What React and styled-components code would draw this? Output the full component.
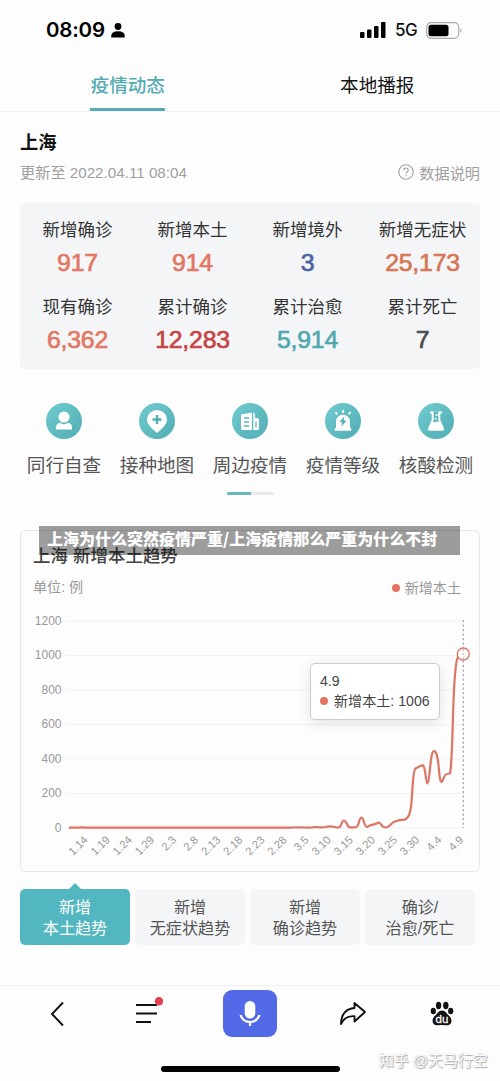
import React from "react";
import styled, { createGlobalStyle } from "styled-components";

const Global = createGlobalStyle`
  * { box-sizing: border-box; }
  body { margin: 0; background: #fdfdfd; overflow: hidden; }
`;

const Screen = styled.div`
  position: relative;
  width: 500px;
  height: 1081px;
  overflow: hidden;
  display: flex;
  flex-direction: column;
  background: #fdfdfd;
  color: #111;
  white-space: nowrap;
  font-family: "Liberation Sans", "Noto Sans CJK SC", sans-serif;
  svg { display: block; flex: none; }
`;

const StatusBar = styled.header`
  height: 60px;
  flex: none;
  display: flex;
  justify-content: space-between;
  align-items: center;
  padding: 0 37px 0 46px;
`;

const StatusGroup = styled.div`
  display: flex;
  align-items: center;
  gap: ${(p) => p.$gap}px;
`;

const Clock = styled.span`
  font: 600 20.5px/24px Inter, sans-serif;
  letter-spacing: -0.2px;
  color: #000;
`;

const Network = styled.span`
  font: 500 17px/20px Inter, sans-serif;
  letter-spacing: -0.3px;
  color: #111;
`;

const Tabs = styled.nav`
  height: 52px;
  flex: none;
  display: flex;
  border-bottom: 1px solid #f1f1f1;
`;

const TabSlot = styled.div`
  flex: 1;
  display: flex;
  justify-content: center;
  padding-left: ${(p) => (p.$active ? 5 : 4)}px;
`;

const Tab = styled.div`
  width: 75px;
  padding-top: 12px;
  text-align: center;
  font-size: 18.6px;
  line-height: 27px;
  font-weight: ${(p) => (p.$active ? 500 : 400)};
  color: ${(p) => (p.$active ? "#55abb2" : "#151515")};
  border-bottom: 3px solid ${(p) => (p.$active ? "#57aab2" : "transparent")};
`;

const City = styled.h1`
  margin: 17px 0 0 20px;
  flex: none;
  height: 27px;
  font-size: 18.3px;
  line-height: 27px;
  font-weight: 700;
`;

const InfoRow = styled.div`
  display: flex;
  justify-content: space-between;
  align-items: center;
  flex: none;
  height: 22px;
  margin: 4px 20px 0;
  color: #a0a0a0;
  font-size: 15.2px;
`;

const UpdateText = styled.span`
  padding-bottom: 1px;
`;

const HelpLink = styled.span`
  display: flex;
  align-items: center;
  gap: 5px;
  padding-top: 2px;
`;

const StatsCard = styled.section`
  flex: none;
  height: 166px;
  margin: 21px 20px 0;
  padding-top: 14px;
  display: grid;
  grid-template-columns: repeat(4, 1fr);
  grid-auto-rows: 77px;
  border-radius: 5px;
  background: #f4f5f7;
  text-align: center;
`;

const StatLabel = styled.div`
  font-size: 17.5px;
  line-height: 26px;
  color: #333;
`;

const StatValue = styled.div`
  margin-top: 5px;
  font-size: 24.8px;
  line-height: 30px;
  letter-spacing: -0.2px;
  -webkit-text-stroke: 0.65px currentColor;
  color: ${(p) => p.$color};
`;

const Shortcuts = styled.section`
  flex: none;
  display: grid;
  grid-template-columns: repeat(5, 93px);
  justify-content: center;
  margin-top: 34px;
  height: 76px;
`;

const Shortcut = styled.div`
  display: flex;
  flex-direction: column;
  align-items: center;
  font-size: 18.6px;
  line-height: 27px;
  color: #555;
  gap: 13px;
`;

const Badge = styled.div`
  width: 36px;
  height: 36px;
  border-radius: 50%;
  background: linear-gradient(135deg, #70cccf, #51acb4);
`;

const Pager = styled.div`
  flex: none;
  width: 47px;
  height: 3px;
  margin: 13px auto 0;
  border-radius: 2px;
  background: linear-gradient(90deg, #65b8bf 50%, #e8ebeb 50%);
`;

const ChartCard = styled.section`
  position: relative;
  flex: none;
  height: 342px;
  margin: 35px 20px 0;
  padding: 12px 0 0;
  border: 1px solid #e7e7e7;
  border-radius: 6px;
`;

const ChartTitle = styled.h2`
  margin: 0 12px;
  font-size: 17.4px;
  line-height: 26px;
  font-weight: 500;
  letter-spacing: 0.1px;
  color: #444;
`;

const ChartMeta = styled.div`
  display: flex;
  justify-content: space-between;
  padding: 6px 18px 0 12px;
  height: 34px;
  font-size: 14.1px;
  line-height: 24px;
  color: #999;
`;

const Legend = styled.span`
  display: flex;
  align-items: center;
  height: ${(p) => p.$height || 20}px;
  gap: ${(p) => p.$gap || 5}px;
  &::before {
    content: "";
    flex: none;
    width: 8px;
    height: 8px;
    border-radius: 50%;
    background: #e3735f;
  }
`;

const Tooltip = styled.div`
  position: absolute;
  left: 289px;
  top: 132px;
  width: 130px;
  height: 57px;
  padding: 7px 8px 7px 9px;
  border: 1px solid #ccc;
  border-radius: 5px;
  background: #fff;
  box-shadow: 0 3px 14px rgba(0, 0, 0, 0.1);
  color: #444;
  font-size: 14.1px;
  line-height: 20px;
`;

const Caption = styled.div`
  position: absolute;
  left: 39px;
  top: 526px;
  width: 421px;
  height: 29px;
  padding-left: 8px;
  background: rgba(0, 0, 0, 0.385);
  color: #fff;
  font: 900 16px/25px "Noto Sans CJK SC", sans-serif;
`;

const TrendTabs = styled.section`
  flex: none;
  display: flex;
  gap: 5px;
  margin: 17px 20px 0;
`;

const TrendTab = styled.div`
  position: relative;
  width: 110px;
  height: 56px;
  padding-top: 8px;
  border-radius: 5px;
  text-align: center;
  font-size: 16.1px;
  line-height: 21px;
  background: ${(p) => (p.$active ? "#52b7c1" : "#f4f5f7")};
  color: ${(p) => (p.$active ? "#fff" : "#555")};
  &::before {
    content: "";
    display: ${(p) => (p.$active ? "block" : "none")};
    position: absolute;
    left: 49px;
    top: -6px;
    border: solid transparent;
    border-width: 0 6px 6px;
    border-bottom-color: #52b7c1;
  }
`;

const BottomBar = styled.footer`
  margin-top: auto;
  flex: none;
  height: 96px;
  border-top: 1px solid #f0f0f0;
  display: flex;
  flex-direction: column;
  align-items: center;
`;

const NavRow = styled.div`
  width: 100%;
  height: 55px;
  display: grid;
  grid-template-columns: 91px 82px 122px 83px 96px;
  padding-left: 16px;
  align-items: center;
  justify-items: center;
`;

const MicButton = styled.div`
  width: 54px;
  height: 47px;
  border-radius: 9px;
  background: #5269e8;
`;

const HomeIndicator = styled.div`
  width: 179px;
  height: 6px;
  margin-top: 25px;
  border-radius: 3px;
  background: #000;
`;

const Watermark = styled.div`
  position: absolute;
  left: 379px;
  top: 1049px;
  font-size: 14.9px;
  line-height: 24px;
  color: #fff;
  text-shadow: 0 0 1px #999, 1px 1px 1px #aaa;
`;

const stats = [
  ["新增确诊", "917", "#e27763"],
  ["新增本土", "914", "#e27763"],
  ["新增境外", "3", "#4b649f"],
  ["新增无症状", "25,173", "#d67653"],
  ["现有确诊", "6,362", "#e27763"],
  ["累计确诊", "12,283", "#c54342"],
  ["累计治愈", "5,914", "#50a8af"],
  ["累计死亡", "7", "#4b4b4e"],
];

const glyphs = {
  person: (
    <g fill="#fff">
      <circle cx="18" cy="14" r="5.6" />
      <path d="M10 26.500v-2q0-4 4.300-4.700 3.700 3 7.400 0 4.300.7 4.300 4.700v2z" />
    </g>
  ),
  pin: (
    <>
      <path d="M18 30Q8 22 8 16.8a10 9.8 0 0 1 20 0Q28 22 18 30z" fill="#fff" />
      <path d="M18 12v9M13.5 16.5h9" stroke="#53adb5" strokeWidth="2.4" />
    </>
  ),
  building: (
    <>
      <path d="M9 11.500L20 9.500V27H10.500Q9 27 9 25.500z" fill="#fff" />
      <path d="M21.300 9.500L23 10.500V15h2.500q1.500 0 1.500 1.500v9q0 1.500-1.500 1.500h-4.200z" fill="#fff" />
      <path d="M12 15h5M12 19h5M12 23h5M24 18.500v6" stroke="#5bb8be" strokeWidth="1.300" />
    </>
  ),
  alarm: (
    <>
      <path d="M11 25V18.5a7 6.7 0 0 1 14 0V25h1.2v2.7H9.8V25z" fill="#fff" />
      <path d="M18 7v3M10.5 9l1.7 2.5M25.5 9l-1.7 2.5" stroke="#fff" strokeWidth="1.8" />
      <path d="M19.2 13.5L14.5 19h2.7l-.7 4.5 5-6h-2.8z" fill="#53adb5" />
    </>
  ),
  flask: (
    <>
      <path d="M12 8.5h12v2h-1.700V17l3.700 8.500q.8 2.200-1.600 2.200H11.600q-2.400 0-1.600-2.200L13.700 17v-6.500H12z" fill="#fff" />
      <path d="M15.700 8.500h4.600v8.500l1 2q-2.300-1.200-3.800 0-1.500.8-2.600-.2l.8-1.800z" fill="#5ab7bd" />
      <circle cx="18.600" cy="12" r="1.100" fill="#fff" />
      <circle cx="17.600" cy="15.800" r="1" fill="#fff" />
    </>
  ),
};

const shortcuts = [
  ["同行自查", "person"],
  ["接种地图", "pin"],
  ["周边疫情", "building"],
  ["疫情等级", "alarm"],
  ["核酸检测", "flask"],
];

const yTicks = [1200, 1000, 800, 600, 400, 200, 0];
const xTicks = "1.14 1.19 1.24 1.29 2.3 2.8 2.13 2.18 2.23 2.28 3.5 3.10 3.15 3.20 3.25 3.30 4.4 4.9".split(" ");

const Plot = styled.svg`
  text {
    font-family: "Liberation Sans", sans-serif;
    font-size: 12px;
    fill: #999;
    text-anchor: end;
  }
`;

const DateTicks = styled.g`
  text {
    font-size: 11.2px;
  }
`;

function TrendChart() {
  return (
    <Plot width="458" height="266" viewBox="21 603 458 266">
      {yTicks.map((t) => {
        const y = 828 - t * 0.1725;
        return (
          <g key={t}>
            <path d={`M66 ${y}H465`} stroke="#f3f3f3" />
            <text x="61.5" y={y + 3.7}>{t}</text>
          </g>
        );
      })}
      <DateTicks>
        {xTicks.map((t, i) => (
          <text key={t} transform={`translate(${88.5 + i * 22.1} 840.5) rotate(-45)`}>{t}</text>
        ))}
      </DateTicks>
      <path d="M463.300 620V828" stroke="#aaa" strokeWidth="1.300" strokeDasharray="2.300 2.200" />
      <path
        d="M69 827.700H78Q82 827 86 827.700H289C294 827.700 294 827 299 827.500C304 827 306 828 311 827.500C316 826.500 321 828 326 827C331 825 335 827.500 338 827.500C342 828 341 820.500 344 820.500C347 821 347 827.300 350 827.300H356C359 827 359 817.500 361.500 817.500C364 818 364 827 367 827C370 824.500 374 825 379 822.500C381 822.500 381 827.500 385.500 827.500C390 827.500 391 822.500 395 821.500C400 819.500 402 819.700 405.500 819.500C409 816 409 816.500 411 807C413 789 412.500 771 415.500 768.500C418 767 420 766 423 765C425.500 767 425.700 783 427.500 783.500C430 783 430 750.500 434 751.200C440 752 438 782 441.700 782C444 780 443 773 450 773.500C452.500 765 452.500 711 454.500 681C456 661 457 655 461 654"
        fill="none"
        stroke="#dc7563"
        strokeWidth="2.200"
        strokeLinejoin="round"
      />
      <circle cx="463.300" cy="654" r="6" fill="#fff" stroke="#dc7563" strokeWidth="1.300" />
      <path d="M463.300 649v10" stroke="#bbb" strokeDasharray="2 2" />
    </Plot>
  );
}

const trends = [
  ["新增", "本土趋势"],
  ["新增", "无症状趋势"],
  ["新增", "确诊趋势"],
  ["确诊/", "治愈/死亡"],
];

export default function App() {
  return (
    <Screen>
      <Global />
      <StatusBar>
        <StatusGroup $gap={6}>
          <Clock>08:09</Clock>
          <svg width="14" height="15" viewBox="0 0 14 15">
            <circle cx="7" cy="3.500" r="3.400" />
            <path d="M.3 14.500Q-.5 8.300 7 8.300t6.700 6.200z" />
          </svg>
        </StatusGroup>
        <StatusGroup $gap={8.5}>
          <svg width="26" height="16" viewBox="0 0 26 16">
            <rect x="0" y="10" width="4.500" height="6" rx="1" />
            <rect x="7" y="7.500" width="4.500" height="8.500" rx="1" />
            <rect x="14" y="4" width="4.500" height="12" rx="1" />
            <rect x="21" y="0" width="4.500" height="16" rx="1" />
          </svg>
          <Network>5G</Network>
          <svg width="37" height="17" viewBox="0 0 37 17">
            <rect x=".7" y=".7" width="32" height="15.600" rx="4.500" fill="none" stroke="#aaa" strokeWidth="1.200" />
            <rect x="2.500" y="2.700" width="20" height="11.600" rx="2.500" />
            <path d="M34.500 6q2 2.500 0 5z" fill="#999" />
          </svg>
        </StatusGroup>
      </StatusBar>

      <Tabs>
        <TabSlot $active><Tab $active>疫情动态</Tab></TabSlot>
        <TabSlot><Tab>本地播报</Tab></TabSlot>
      </Tabs>

      <City>上海</City>
      <InfoRow>
        <UpdateText>更新至 2022.04.11 08:04</UpdateText>
        <HelpLink>
          <svg width="16" height="16" viewBox="0 0 16 16" fill="none" stroke="#a0a0a0" strokeWidth="1.100">
            <circle cx="8" cy="8" r="7.200" />
            <path d="M5.700 6.300c0-3 4.600-3 4.600-.2C10.300 7.800 8 7.800 8 9.800M8 11v1.300" />
          </svg>
          数据说明
        </HelpLink>
      </InfoRow>

      <StatsCard>
        {stats.map(([label, value, color]) => (
          <div key={label}>
            <StatLabel>{label}</StatLabel>
            <StatValue $color={color}>{value}</StatValue>
          </div>
        ))}
      </StatsCard>

      <Shortcuts>
        {shortcuts.map(([label, icon]) => (
          <Shortcut key={label}>
            <Badge>
              <svg width="36" height="36" viewBox="0 0 36 36">{glyphs[icon]}</svg>
            </Badge>
            {label}
          </Shortcut>
        ))}
      </Shortcuts>
      <Pager />

      <ChartCard>
        <ChartTitle>上海 新增本土趋势</ChartTitle>
        <ChartMeta>
          <span>单位: 例</span>
          <Legend $height={26}>新增本土</Legend>
        </ChartMeta>
        <TrendChart />
        <Tooltip>
          <div>4.9</div>
          <Legend $gap={6}>新增本土: 1006</Legend>
        </Tooltip>
      </ChartCard>

      <TrendTabs>
        {trends.map(([a, b], i) => (
          <TrendTab key={b} $active={i === 0}>
            {a}
            <br />
            {b}
          </TrendTab>
        ))}
      </TrendTabs>

      <BottomBar>
        <NavRow>
          <svg width="24" height="26" viewBox="0 0 24 26" fill="none" stroke="#111" strokeWidth="1.900">
            <path d="M13 1.500L2 13l11 11.500" />
          </svg>
          <svg width="30" height="34" viewBox="0 0 30 34">
            <path d="M3 8h21M3 16.500h21M3 25h15" stroke="#111" strokeWidth="2" />
            <circle cx="26" cy="4.300" r="4.200" fill="#e43e51" />
          </svg>
          <MicButton>
            <svg width="54" height="47" viewBox="0 0 54 47">
              <rect x="21.700" y="11" width="10.600" height="17.500" rx="5.300" fill="#fff" />
              <path d="M17.500 25q2.500 7 9.500 7t9.500-7M27 32v4" fill="none" stroke="#fff" strokeWidth="2.200" />
            </svg>
          </MicButton>
          <svg width="28" height="26" viewBox="0 0 28 26" fill="none" stroke="#111" strokeWidth="1.900" strokeLinejoin="round">
            <path d="M15.500 2L26 11 15.500 20.500v-5.300Q6 14.500 2 23C2 13 7.500 7.500 15.500 7z" />
          </svg>
          <svg width="24" height="26" viewBox="0 0 24 26" fill="#111">
            <ellipse cx="8.600" cy="4.500" rx="2.700" ry="3.700" />
            <ellipse cx="15.800" cy="4.500" rx="2.700" ry="3.700" />
            <ellipse cx="3.300" cy="10" rx="2.600" ry="3.200" />
            <ellipse cx="20.700" cy="10" rx="2.600" ry="3.200" />
            <path d="M12 9.500c3.500 0 4.300 3 7 5.300 4.500 4 2.500 10-2.500 9.500q-4.500-.6-9 0C2.500 24.800.5 18.800 5 14.800 7.700 12.500 8.500 9.500 12 9.500z" />
            <text x="12" y="22.300" textAnchor="middle" fontFamily="Liberation Sans, sans-serif" fontSize="11.500" fill="#fff" stroke="#fff" strokeWidth=".3">du</text>
          </svg>
        </NavRow>
        <HomeIndicator />
      </BottomBar>

      <Caption>上海为什么突然疫情严重/上海疫情那么严重为什么不封</Caption>
      <Watermark>知乎 @天马行空</Watermark>
    </Screen>
  );
}
